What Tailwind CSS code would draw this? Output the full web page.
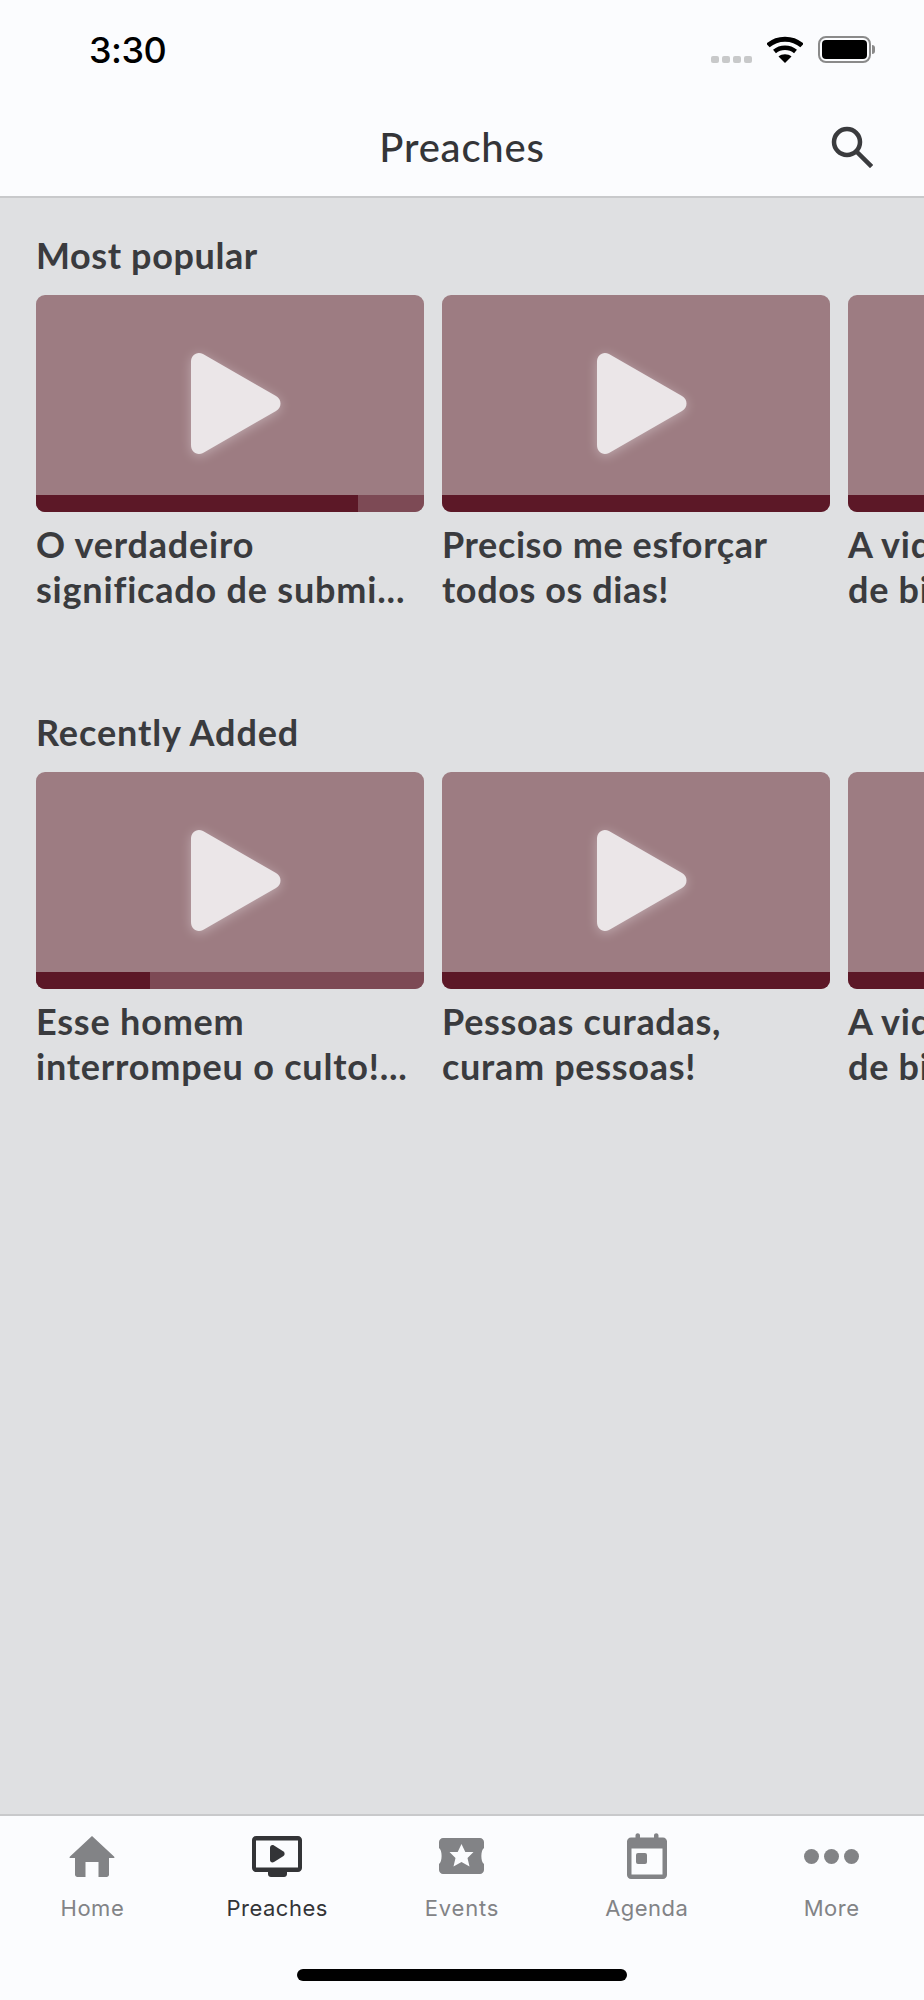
<!DOCTYPE html>
<html>
<head>
<meta charset="utf-8">
<script src="https://cdn.jsdelivr.net/npm/@tailwindcss/browser@4"></script>
</head>
<body class="m-0">
<div class="flex flex-col w-[924px] h-[2000px] overflow-hidden bg-[#dfe0e2] font-['Lato',sans-serif]">
  <!-- header -->
  <header class="h-[198px] shrink-0 bg-[#fbfcfe] border-b-2 border-[#c8c9cb] flex flex-col">
    <div class="h-[100px] relative flex items-start justify-between pl-[89px] pr-[49px] pt-[28px]">
      <span class="text-[36px] leading-[44px] font-medium text-black font-['Inter',sans-serif] tracking-[-0.5px]">3:30</span>
      <div class="flex items-center gap-[15px] pt-[8px]">
        <div class="flex gap-[3px] mt-[19px]">
          <span class="w-[8px] h-[7px] rounded-[2px] bg-[#c8c9ca]"></span>
          <span class="w-[8px] h-[7px] rounded-[2px] bg-[#c8c9ca]"></span>
          <span class="w-[8px] h-[7px] rounded-[2px] bg-[#c8c9ca]"></span>
          <span class="w-[8px] h-[7px] rounded-[2px] bg-[#c8c9ca]"></span>
        </div>
        <svg width="36" height="27" viewBox="0 0 36 27" class="block">
          <path d="M1 9.5C10.5 1 25.500 1 35 9.500" fill="none" stroke="#000" stroke-width="5"/>
          <path d="M7.500 15.500C13.500 10.500 22.500 10.500 28.500 15.500" fill="none" stroke="#000" stroke-width="4.500"/>
          <path d="M18 27L11.500 20.500C15 17.500 21 17.500 24.500 20.500Z" fill="#000"/>
        </svg>
        <div class="flex items-center">
          <div class="w-[53px] h-[27px] rounded-[8px] border-2 border-[#8a8a8a] p-[2px]">
            <div class="w-full h-full rounded-[4px] bg-black"></div>
          </div>
          <span class="w-[3px] h-[9px] rounded-r-[3px] bg-[#8a8a8a] ml-[1px]"></span>
        </div>
      </div>
    </div>
    <div class="flex-1 relative flex items-center justify-center">
      <h1 class="text-[40px] leading-[44px] font-medium text-[#343538] tracking-[0.8px] mt-[-2px]">Preaches</h1>
      <svg width="42" height="42" viewBox="0 0 42 42" class="absolute left-[831px] top-[26px]" fill="none" stroke="#3a3b3e" stroke-width="4.500">
        <circle cx="16" cy="16" r="13"/>
        <path d="M25.500 25.500L39 39" stroke-linecap="square"/>
      </svg>
    </div>
  </header>

  <!-- content -->
  <main class="flex-1 flex flex-col">
    <section class="pt-[35px] pl-[36px] h-[512px] shrink-0">
      <h2 class="text-[36px] leading-[44px] font-bold tracking-[0.6px] text-[#3a3b3e]">Most popular</h2>
      <div class="flex gap-[18px] mt-[18px]">
        <article class="w-[388px] shrink-0">
          <div class="h-[217px] rounded-[9px] overflow-hidden bg-[#9d7c82] flex flex-col">
            <div class="flex-1 flex items-center justify-center">
              <svg width="92" height="103" viewBox="0 0 92 103" class="drop-shadow-[0_2px_6px_rgba(255,255,255,0.35)] ml-[11px] mt-[17px]"><path d="M1 10C1 3 7 -1 13 2L86 44C92 47 92 56 86 59L13 101C7 104 1 100 1 93Z" fill="#ebe6e8"/></svg>
            </div>
            <div class="h-[17px] bg-[#7d4a55]"><div class="h-full w-[322px] bg-[#5c1827]"></div></div>
          </div>
          <p class="mt-[10px] text-[36px] leading-[45px] font-bold tracking-[0.8px] text-[#3a3b3e] whitespace-nowrap">O verdadeiro<br>significado de submi...</p>
        </article>
        <article class="w-[388px] shrink-0">
          <div class="h-[217px] rounded-[9px] overflow-hidden bg-[#9d7c82] flex flex-col">
            <div class="flex-1 flex items-center justify-center">
              <svg width="92" height="103" viewBox="0 0 92 103" class="drop-shadow-[0_2px_6px_rgba(255,255,255,0.35)] ml-[11px] mt-[17px]"><path d="M1 10C1 3 7 -1 13 2L86 44C92 47 92 56 86 59L13 101C7 104 1 100 1 93Z" fill="#ebe6e8"/></svg>
            </div>
            <div class="h-[17px] bg-[#5c1827]"></div>
          </div>
          <p class="mt-[10px] text-[36px] leading-[45px] font-bold tracking-[0.6px] text-[#3a3b3e] whitespace-nowrap">Preciso me esforçar<br>todos os dias!</p>
        </article>
        <article class="w-[388px] shrink-0">
          <div class="h-[217px] rounded-[9px] overflow-hidden bg-[#9d7c82] flex flex-col">
            <div class="flex-1"></div>
            <div class="h-[17px] bg-[#5c1827]"></div>
          </div>
          <p class="mt-[10px] text-[36px] leading-[45px] font-bold tracking-[0.7px] text-[#3a3b3e] whitespace-nowrap">A vida<br>de bi</p>
        </article>
      </div>
    </section>
    <section class="pl-[36px]">
      <h2 class="text-[36px] leading-[44px] font-bold tracking-[0.9px] text-[#3a3b3e]">Recently Added</h2>
      <div class="flex gap-[18px] mt-[18px]">
        <article class="w-[388px] shrink-0">
          <div class="h-[217px] rounded-[9px] overflow-hidden bg-[#9d7c82] flex flex-col">
            <div class="flex-1 flex items-center justify-center">
              <svg width="92" height="103" viewBox="0 0 92 103" class="drop-shadow-[0_2px_6px_rgba(255,255,255,0.35)] ml-[11px] mt-[17px]"><path d="M1 10C1 3 7 -1 13 2L86 44C92 47 92 56 86 59L13 101C7 104 1 100 1 93Z" fill="#ebe6e8"/></svg>
            </div>
            <div class="h-[17px] bg-[#7d4a55]"><div class="h-full w-[114px] bg-[#5c1827]"></div></div>
          </div>
          <p class="mt-[10px] text-[36px] leading-[45px] font-bold tracking-[0.8px] text-[#3a3b3e] whitespace-nowrap">Esse homem<br>interrompeu o culto!...</p>
        </article>
        <article class="w-[388px] shrink-0">
          <div class="h-[217px] rounded-[9px] overflow-hidden bg-[#9d7c82] flex flex-col">
            <div class="flex-1 flex items-center justify-center">
              <svg width="92" height="103" viewBox="0 0 92 103" class="drop-shadow-[0_2px_6px_rgba(255,255,255,0.35)] ml-[11px] mt-[17px]"><path d="M1 10C1 3 7 -1 13 2L86 44C92 47 92 56 86 59L13 101C7 104 1 100 1 93Z" fill="#ebe6e8"/></svg>
            </div>
            <div class="h-[17px] bg-[#5c1827]"></div>
          </div>
          <p class="mt-[10px] text-[36px] leading-[45px] font-bold tracking-[0.7px] text-[#3a3b3e] whitespace-nowrap">Pessoas curadas,<br>curam pessoas!</p>
        </article>
        <article class="w-[388px] shrink-0">
          <div class="h-[217px] rounded-[9px] overflow-hidden bg-[#9d7c82] flex flex-col">
            <div class="flex-1"></div>
            <div class="h-[17px] bg-[#5c1827]"></div>
          </div>
          <p class="mt-[10px] text-[36px] leading-[45px] font-bold tracking-[0.7px] text-[#3a3b3e] whitespace-nowrap">A vida<br>de bi</p>
        </article>
      </div>
    </section>
  </main>

  <!-- tab bar -->
  <nav class="h-[186px] shrink-0 bg-[#fbfcfe] border-t-2 border-[#c8c9cb] relative font-['Inter',sans-serif]">
    <div class="grid grid-cols-5 h-[116px] text-[22px] leading-[28px] tracking-[0.5px] text-[#828386]">
      <div class="flex flex-col items-center pt-[17px]">
        <div class="h-[46px] flex items-center justify-center">
          <svg width="46" height="41" viewBox="0 0 46 41" fill="#828386"><path d="M23 0L45 20.500C46 21.500 45.500 22 44 22H40V38.500C40 40 39 41 37.500 41H29.500V26H16.500V41H8.500C7 41 6 40 6 38.500V22H2C0.500 22 0 21.500 1 20.500Z"/></svg>
        </div>
        <span class="mt-[15px]">Home</span>
      </div>
      <div class="flex flex-col items-center pt-[17px] text-[#333437]">
        <div class="h-[46px] flex items-center justify-center">
          <svg width="50" height="41" viewBox="0 0 50 41" fill="#333437"><path fill-rule="evenodd" d="M4 0H46C48.200 0 50 1.800 50 4V32C50 34.200 48.200 36 46 36H35V38C35 39.700 33.700 41 32 41H19C17.300 41 16 39.700 16 38V36H4C1.800 36 0 34.200 0 32V4C0 1.800 1.800 0 4 0ZM4 4.500V31.500H46V4.500Z"/><path d="M18 12C18 9.500 20 8.500 22 9.500L31.500 15.500C33 16.500 33 19 31.500 20L22 26C20 27 18 26 18 24Z"/></svg>
        </div>
        <span class="mt-[15px]">Preaches</span>
      </div>
      <div class="flex flex-col items-center pt-[17px]">
        <div class="h-[46px] flex items-center justify-center">
          <svg width="45" height="36" viewBox="0 0 45 36" fill="#828386"><path fill-rule="evenodd" d="M4 0H41C43 0 45 1.800 45 4V10C41.500 12 41.500 24 45 26V32C45 34.200 43 36 41 36H4C2 36 0 34.200 0 32V26C3.500 24 3.500 12 0 10V4C0 1.800 2 0 4 0ZM22.500 6L18.700 14H10.500L16.500 20L14.500 28.500L22.500 24L30.500 28.500L28.500 20L34.500 14H26.300Z"/></svg>
        </div>
        <span class="mt-[15px] tracking-[0.8px]">Events</span>
      </div>
      <div class="flex flex-col items-center pt-[17px]">
        <div class="h-[46px] flex items-center justify-center">
          <svg width="40" height="46" viewBox="0 0 40 46" fill="#828386"><path fill-rule="evenodd" d="M4 4.500H8.500V2.500C8.500 -0.500 13 -0.500 13 2.500V4.500H27V2.500C27 -0.500 31.500 -0.500 31.500 2.500V4.500H36C38.200 4.500 40 6.300 40 8.500V42C40 44.200 38.200 46 36 46H4C1.800 46 0 44.200 0 42V8.500C0 6.300 1.800 4.500 4 4.500ZM4.500 15.500V41.500H35.500V15.500Z"/><rect x="9" y="20" width="11" height="11" rx="2"/></svg>
        </div>
        <span class="mt-[15px]">Agenda</span>
      </div>
      <div class="flex flex-col items-center pt-[17px]">
        <div class="h-[46px] flex items-center justify-center gap-[5px]">
          <span class="w-[15px] h-[15px] rounded-full bg-[#828386]"></span>
          <span class="w-[15px] h-[15px] rounded-full bg-[#828386]"></span>
          <span class="w-[15px] h-[15px] rounded-full bg-[#828386]"></span>
        </div>
        <span class="mt-[15px]">More</span>
      </div>
    </div>
    <div class="w-[330px] h-[12px] rounded-full bg-black mx-auto mt-[37px]"></div>
  </nav>
</div>
</body>
</html>
